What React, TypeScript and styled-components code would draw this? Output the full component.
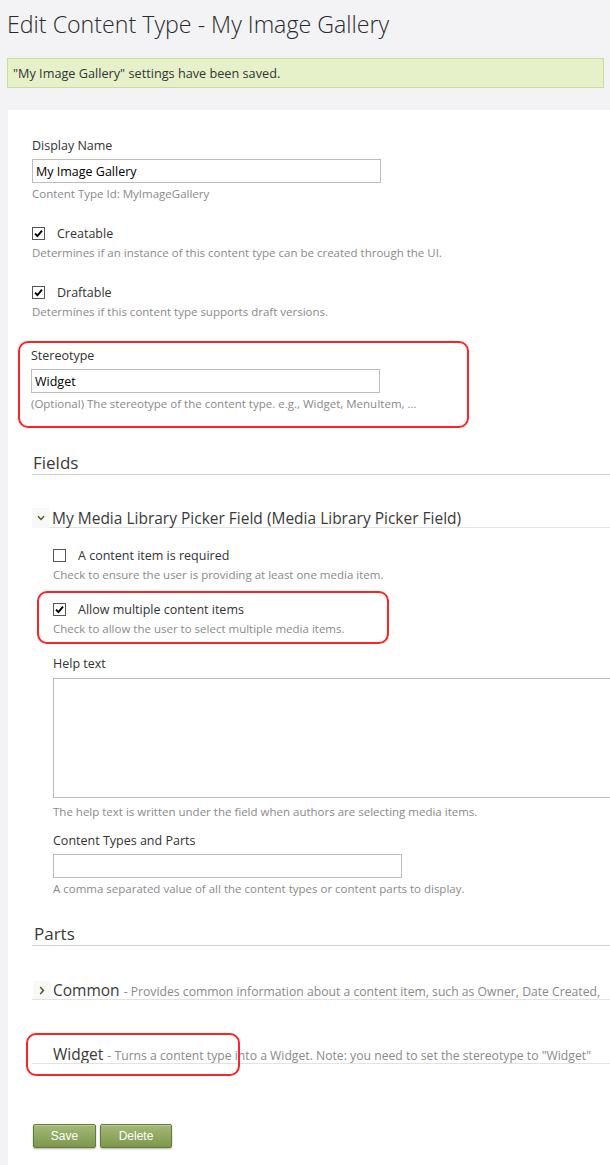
import React from 'react';
import styled, { createGlobalStyle } from 'styled-components';

const Global = createGlobalStyle`
  html, body { margin: 0; padding: 0; background: #f3f3f5; overflow: hidden; }
  body { font-family: "Open Sans", "Liberation Sans", sans-serif; color: #333; }
  #root { width: 610px; height: 1165px; overflow: hidden; }
`;

const Page = styled.div`
  width: 610px;
  height: 1165px;
  overflow: hidden;
  padding-left: 7px;
  box-sizing: border-box;
`;

const Title = styled.h1`
  margin: 0;
  padding-top: 10px;
  font-weight: 300;
  font-size: 23.2px;
  line-height: 28px;
  color: #2a2a2a;
  white-space: nowrap;
`;

const Message = styled.div`
  margin-top: 20px;
  width: 597px;
  height: 30px;
  box-sizing: border-box;
  background: #e6f1ca;
  border: 1px solid #c9df93;
  padding-left: 5px;
  display: flex;
  align-items: center;
  font-size: 12.7px;
  color: #333;
`;

const Panel = styled.div`
  margin-top: 22px;
  margin-left: 1px;
  width: 640px;
  height: 1100px;
  background: #fff;
  padding: 27px 0 0 24px;
  box-sizing: border-box;
`;

const Label = styled.div`
  font-size: 12.5px;
  line-height: 18px;
  color: #333;
  white-space: nowrap;
`;

const TextInput = styled.input<{ $w: number }>`
  display: block;
  margin-top: 4px;
  width: ${p => p.$w}px;
  height: 24px;
  box-sizing: border-box;
  border: 1px solid #bdbdbd;
  padding: 0 3px;
  font-family: "Open Sans", "Liberation Sans", sans-serif;
  font-size: 12.5px;
  color: #000;
  outline: none;
`;

const Hint = styled.div<{ $mt?: number }>`
  margin-top: ${p => p.$mt ?? 3}px;
  font-size: 11.5px;
  line-height: 16px;
  color: #8a8a8a;
  white-space: nowrap;
`;

const Block = styled.div<{ $mt: number }>`
  margin-top: ${p => p.$mt}px;
`;

const Highlight = styled.div<{ $ml: number; $w: number; $pt: number; $pb: number; $pl: number }>`
  border: 2px solid #ff2222;
  border-radius: 10px;
  margin-left: ${p => p.$ml}px;
  width: ${p => p.$w}px;
  box-sizing: border-box;
  padding: ${p => p.$pt}px 0 ${p => p.$pb}px ${p => p.$pl}px;
`;

const CheckRow = styled.label`
  display: flex;
  align-items: center;
  gap: 12px;
  height: 18px;
  font-size: 12.5px;
  color: #333;
  white-space: nowrap;
`;

const Box = styled.span`
  width: 13px;
  height: 13px;
  box-sizing: border-box;
  border: 1px solid #555;
  background: #fff;
  display: inline-flex;
  align-items: center;
  justify-content: center;
  flex: none;
`;

const Check = ({ checked, label }: { checked?: boolean; label: string }) => (
  <CheckRow>
    <Box>
      {checked && (
        <svg width="9" height="9" viewBox="0 0 9 9">
          <path d="M1 4.6 L3.4 7 L8 1.6" fill="none" stroke="#000" strokeWidth="1.9" />
        </svg>
      )}
    </Box>
    {label}
  </CheckRow>
);

const SectionHeading = styled.h2<{ $mt: number; $ml: number }>`
  margin: ${p => p.$mt}px 0 0 0;
  padding-left: ${p => p.$ml}px;
  font-weight: 400;
  font-size: 17px;
  line-height: 22px;
  color: #3a3a3a;
  border-bottom: 1px solid #cfcfcf;
`;

const ItemRow = styled.div<{ $mt: number }>`
  margin-top: ${p => p.$mt}px;
  display: flex;
  align-items: stretch;
  height: 20px;
  position: relative;
  white-space: nowrap;
`;

const Toggle = styled.span<{ $w: number }>`
  width: ${p => p.$w}px;
  flex: none;
  background: #f8f8f6;
  display: flex;
  align-items: center;
  justify-content: center;
`;

const ItemTitle = styled.div<{ $pl: number }>`
  flex: 1;
  padding-left: ${p => p.$pl}px;
  border-bottom: 1px solid #e3e3e3;
  font-size: 15.5px;
  line-height: 20px;
  color: #3a3a3a;
  display: flex;
  align-items: baseline;
`;

const ItemDesc = styled.span`
  font-size: 12.2px;
  color: #8a8a8a;
  margin-left: 4px;
`;

const FlatItem = styled.div`
  display: flex;
  border-bottom: 1px solid #e3e3e3;
  padding-left: 21px;
  flex: 1;
  font-size: 15.5px;
  line-height: 20px;
  color: #3a3a3a;
  align-items: baseline;
  overflow: hidden;
`;

const Nested = styled.div`
  padding-left: 21px;
`;

const TextArea = styled.textarea`
  display: block;
  margin-top: 5px;
  width: 600px;
  height: 120px;
  box-sizing: border-box;
  border: 1px solid #bdbdbd;
  resize: none;
  outline: none;
`;

const Marker = styled.div`
  position: absolute;
  left: -6px;
  top: -11px;
  width: 214px;
  height: 43px;
  box-sizing: border-box;
  border: 2px solid #ff2222;
  border-radius: 10px;
  pointer-events: none;
`;

const Actions = styled.div`
  margin-top: 60px;
  margin-left: 1px;
  display: flex;
  gap: 4px;
`;

const Button = styled.button<{ $w: number }>`
  width: ${p => p.$w}px;
  height: 24px;
  box-sizing: border-box;
  border: 1px solid #5f7c38;
  border-radius: 2px;
  background: linear-gradient(#a4b977, #7d984d);
  box-shadow: 0 1px 2px rgba(0, 0, 0, 0.3), inset 0 1px 0 rgba(255, 255, 255, 0.25);
  color: #fff;
  font-family: "Liberation Sans", Arial, sans-serif;
  font-size: 12px;
  padding: 0;
`;

const ChevronWrap = styled.span`
  position: absolute;
  left: 1px;
  top: 1px;
  width: 18px;
  height: 18px;
  background: #f8f8f6;
  display: flex;
  align-items: center;
  justify-content: center;
`;

function ChevronRight() {
  return (
    <ChevronWrap>
      <svg width="6" height="9" viewBox="0 0 6 9">
        <path d="M1.2 1 L4.4 4.5 L1.2 8" fill="none" stroke="#4f5b1e" strokeWidth="1.5" />
      </svg>
    </ChevronWrap>
  );
}

export default function App() {
  return (
    <>
      <Global />
      <Page>
        <Title>Edit Content Type - My Image Gallery</Title>
        <Message>"My Image Gallery" settings have been saved.</Message>
        <Panel>
          <Label>Display Name</Label>
          <TextInput $w={349} defaultValue="My Image Gallery" />
          <Hint>Content Type Id: MyImageGallery</Hint>

          <Block $mt={22}>
            <Check checked label="Creatable" />
            <Hint>Determines if an instance of this content type can be created through the UI.</Hint>
          </Block>

          <Block $mt={22}>
            <Check checked label="Draftable" />
            <Hint>Determines if this content type supports draft versions.</Hint>
          </Block>

          <Block $mt={21}>
            <Highlight $ml={-14} $w={451} $pt={4} $pb={14} $pl={11}>
              <Label>Stereotype</Label>
              <TextInput $w={349} defaultValue="Widget" />
              <Hint>(Optional) The stereotype of the content type. e.g., Widget, MenuItem, ...</Hint>
            </Highlight>
          </Block>

          <SectionHeading $mt={24} $ml={1}>Fields</SectionHeading>

          <ItemRow $mt={33}>
            <Toggle $w={17}>
              <svg width="8" height="6" viewBox="0 0 8 6">
                <path d="M1 1.2 L4 4.4 L7 1.2" fill="none" stroke="#4f5b1e" strokeWidth="1.5" />
              </svg>
            </Toggle>
            <ItemTitle $pl={3}>My Media Library Picker Field (Media Library Picker Field)</ItemTitle>
          </ItemRow>

          <Nested>
            <Block $mt={18}>
              <Check label="A content item is required" />
              <Hint>Check to ensure the user is providing at least one media item.</Hint>
            </Block>
            <Block $mt={8}>
              <Highlight $ml={-16} $w={352} $pt={7} $pb={5} $pl={14}>
                <Check checked label="Allow multiple content items" />
                <Hint>Check to allow the user to select multiple media items.</Hint>
              </Highlight>
            </Block>
            <Block $mt={11}>
              <Label>Help text</Label>
              <TextArea />
              <Hint $mt={6}>The help text is written under the field when authors are selecting media items.</Hint>
            </Block>
            <Block $mt={12}>
              <Label>Content Types and Parts</Label>
              <TextInput $w={349} />
              <Hint>A comma separated value of all the content types or content parts to display.</Hint>
            </Block>
          </Nested>

          <SectionHeading $mt={26} $ml={2}>Parts</SectionHeading>

          <ItemRow $mt={34}>
            <FlatItem>
              Common<ItemDesc>- Provides common information about a content item, such as Owner, Date Created,</ItemDesc>
            </FlatItem>
            <ChevronRight />
          </ItemRow>

          <ItemRow $mt={44}>
            <FlatItem>
              Widget<ItemDesc>- Turns a content type into a Widget. Note: you need to set the stereotype to "Widget"</ItemDesc>
            </FlatItem>
            <Marker />
          </ItemRow>

          <Actions>
            <Button $w={63}>Save</Button>
            <Button $w={72}>Delete</Button>
          </Actions>
        </Panel>
      </Page>
    </>
  );
}
